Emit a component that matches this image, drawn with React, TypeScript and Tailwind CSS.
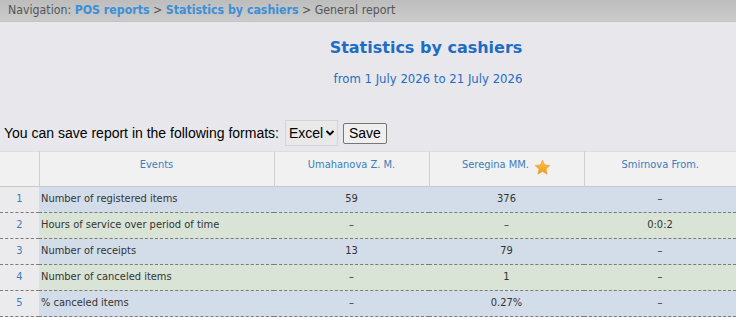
import React from "react";

const rows = [
  { n: 1, label: "Number of registered items", a: "59", b: "376", c: "–", tone: "blue" },
  { n: 2, label: "Hours of service over period of time", a: "–", b: "–", c: "0:0:2", tone: "green" },
  { n: 3, label: "Number of receipts", a: "13", b: "79", c: "–", tone: "blue" },
  { n: 4, label: "Number of canceled items", a: "–", b: "1", c: "–", tone: "green" },
  { n: 5, label: "% canceled items", a: "–", b: "0.27%", c: "–", tone: "blue" },
];

const Star = () => (
  <svg width="17" height="17" viewBox="0 0 24 24" className="inline-block mt-[2px]">
    <defs>
      <linearGradient id="st" x1="0" y1="0" x2="0" y2="1">
        <stop offset="0" stopColor="#fcc24a" />
        <stop offset="1" stopColor="#f29a1c" />
      </linearGradient>
    </defs>
    <path
      d="M12 1.5l3.1 6.9 7.4.7-5.6 5 1.7 7.4L12 17.6l-6.6 3.9 1.7-7.4-5.6-5 7.4-.7z"
      fill="url(#st)"
      stroke="#e89a2c"
      strokeWidth="0.8"
      strokeLinejoin="round"
    />
  </svg>
);

const cond = { fontFamily: "'DejaVu Sans Condensed', 'DejaVu Sans', Tahoma, sans-serif" };

export default function App() {
  return (
    <div className="w-[736px] h-[317px] overflow-hidden bg-[#e8e8ec] text-[#333]" style={{ fontFamily: "'DejaVu Sans', Verdana, sans-serif" }}>
      {/* Navigation */}
      <div className="h-[22px] bg-gradient-to-b from-[#bdbdbd] to-[#cbcbcb] border-b border-[#c4c4c8] px-[8px] flex items-center text-[12.25px] text-[#555] whitespace-nowrap" style={cond}>
        Navigation:&nbsp;<span className="font-bold text-[#3b8fd6]">POS reports</span>&nbsp;&gt;&nbsp;
        <span className="font-bold text-[#3b8fd6]">Statistics by cashiers</span>&nbsp;&gt; General report
      </div>

      {/* Title */}
      <div className="pl-[116px] text-center">
        <h1 className="mt-[16px] text-[16px] leading-[20px] font-bold text-[#1f6cc4]">Statistics by cashiers</h1>
        <p className="mt-[13px] ml-[4px] text-[13px] leading-[16px] text-[#1f6cc4]" style={cond}>from 1 July 2026 to 21 July 2026</p>
      </div>

      {/* Save row */}
      <div className="mt-[33px] ml-[4px] flex items-center h-[26px] text-[14px] text-black" style={{ fontFamily: "'Liberation Sans', Arial, sans-serif" }}>
        <span>You can save report in the following formats:</span>
        <div className="ml-[6px] h-[26px] w-[53px] bg-[#e9e9e9] border border-[#d4d4d4] flex items-center pl-[3px] gap-[2px]">
          <span>Excel</span>
          <svg width="10" height="10" viewBox="0 0 10 10">
            <path d="M1.5 3l3.5 3.5L8.5 3" fill="none" stroke="#000" strokeWidth="1.8" />
          </svg>
        </div>
        <button className="ml-[5px] h-[21px] px-[5px] bg-[#efefef] border border-[#767676] rounded-[2px] text-[14px] leading-[16px]">Save</button>
      </div>

      {/* Table */}
      <table className="mt-[5px] w-[736px] border-collapse table-fixed text-[11px]" style={cond}>
        <colgroup>
          <col className="w-[39px]" />
          <col className="w-[235px]" />
          <col className="w-[155px]" />
          <col className="w-[155px]" />
          <col className="w-[152px]" />
        </colgroup>
        <thead>
          <tr className="h-[35px] bg-[#f1f1f1] border-t border-[#dcdcdc] border-b border-b-[#c8c8c8] text-[#3b7dbd]">
            <th className="border-r border-[#cfcfcf]"></th>
            <th className="border-r border-[#cfcfcf] font-normal align-top pt-[5px]">Events</th>
            <th className="border-r border-[#cfcfcf] font-normal align-top pt-[5px]">Umahanova Z. M.</th>
            <th className="border-r border-[#cfcfcf] font-normal align-top pt-[5px]">
              <span className="inline-flex items-start gap-[5px]">Seregina MM. <Star /></span>
            </th>
            <th className="font-normal align-top pt-[5px]">Smirnova From.</th>
          </tr>
        </thead>
        <tbody>
          {rows.map((r) => (
            <tr key={r.n} className={`h-[26px] border-b border-dashed border-[#7a7a7a] ${r.tone === "blue" ? "bg-[#d3dde9]" : "bg-[#d9e4d7]"}`}>
              <td className="bg-[#ebebee] text-center text-[#3b7dbd]">{r.n}</td>
              <td className="pl-[2px]">{r.label}</td>
              <td className="text-center">{r.a}</td>
              <td className="text-center">{r.b}</td>
              <td className="text-center">{r.c}</td>
            </tr>
          ))}
        </tbody>
      </table>
    </div>
  );
}
